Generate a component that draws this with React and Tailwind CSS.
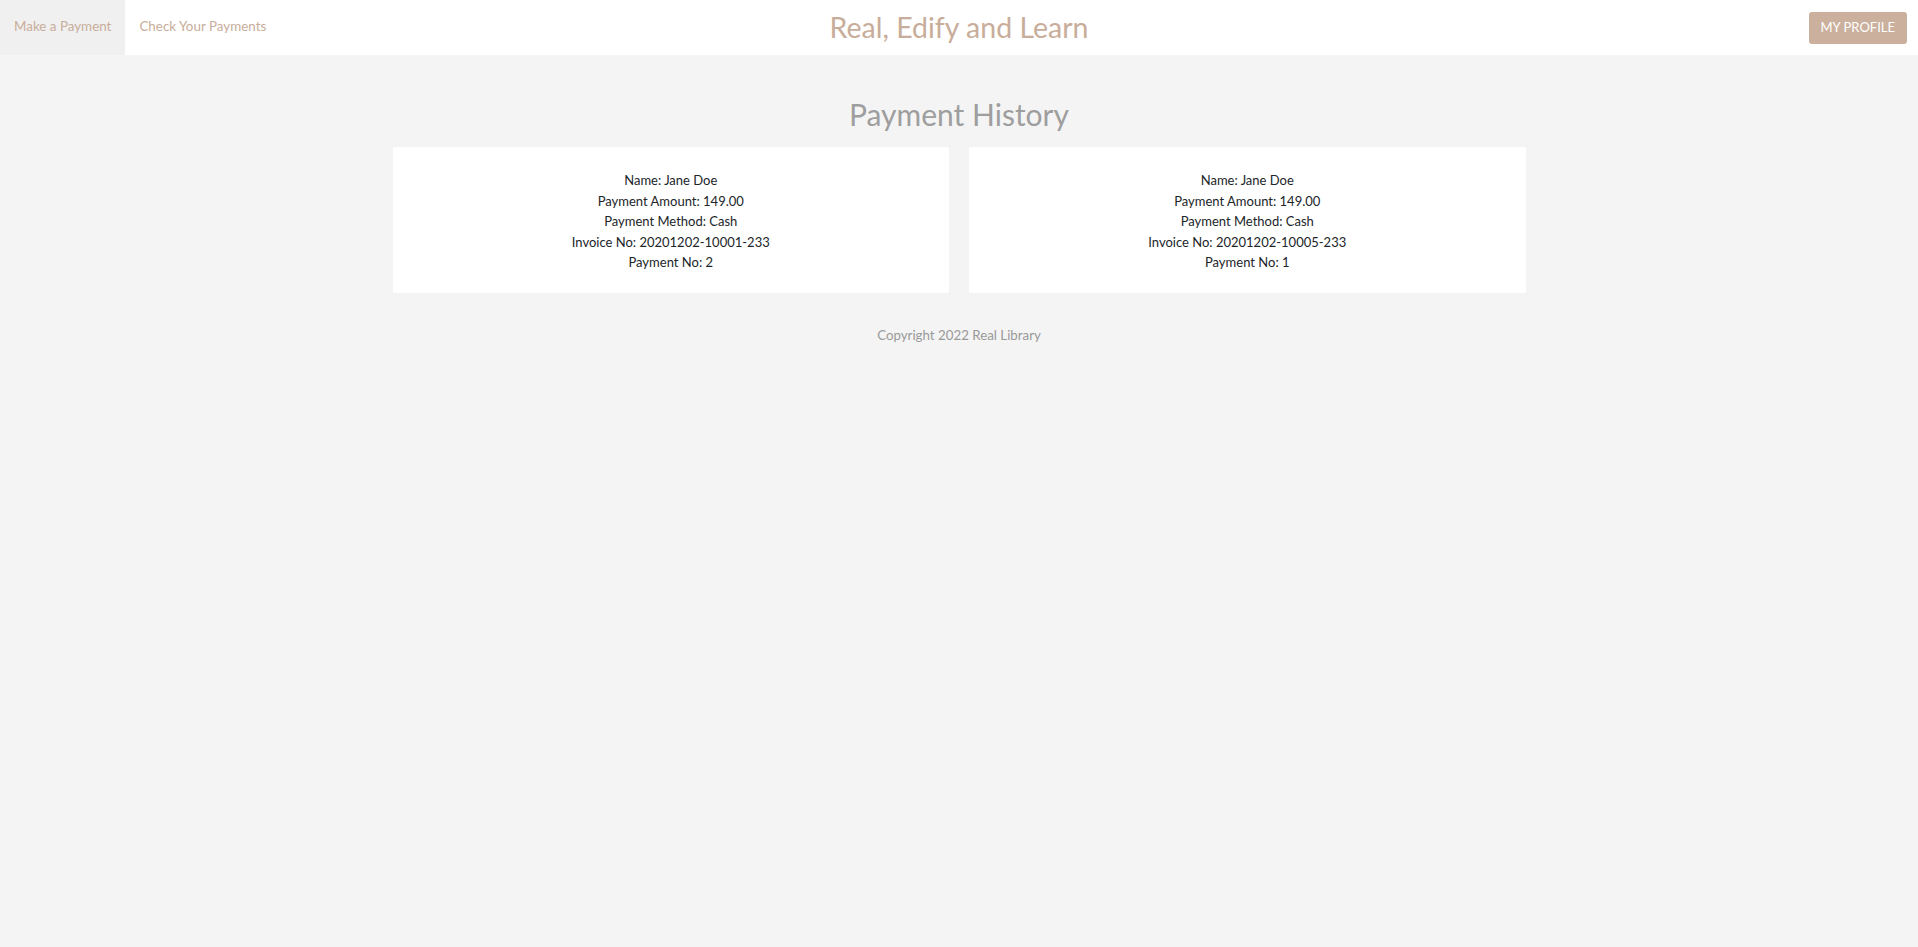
const payments = [
  { name: 'Jane Doe', amount: '149.00', method: 'Cash', invoice: '20201202-10001-233', no: 2 },
  { name: 'Jane Doe', amount: '149.00', method: 'Cash', invoice: '20201202-10005-233', no: 1 },
];

function PaymentCard({ payment }) {
  return (
    <div className="bg-white rounded-[2px] pt-[23px] pb-[20px] text-center text-[13px] leading-[20.5px] text-[#212529]">
      <p>Name: {payment.name}</p>
      <p>Payment Amount: {payment.amount}</p>
      <p>Payment Method: {payment.method}</p>
      <p>Invoice No: {payment.invoice}</p>
      <p>Payment No: {payment.no}</p>
    </div>
  );
}

export default function App() {
  return (
    <div
      className="min-h-screen bg-[#f4f4f4]"
      style={{ fontFamily: '"Segoe UI", Lato, "Noto Sans", sans-serif' }}
    >
      <header className="h-[55px] bg-white flex items-center justify-between relative">
        <nav className="flex h-full text-[13.4px] text-[#c8ad9a]">
          <a href="#" className="flex items-center pb-[2px] px-[14px] bg-[#f0f0f0]">Make a Payment</a>
          <a href="#" className="flex items-center pb-[2px] px-[14px]">Check Your Payments</a>
        </nav>
        <h1 className="absolute left-1/2 -translate-x-1/2 text-[28.5px] text-[#c8ad9a] leading-none pb-[1px]">
          Real, Edify and Learn
        </h1>
        <button className="mr-[11px] h-[32px] px-[12px] rounded-[3px] bg-[#cab09d] text-white text-[13px]">
          MY PROFILE
        </button>
      </header>

      <main className="w-[1133px] mx-auto pt-[40px]">
        <h2 className="text-center text-[30px] leading-[38px] text-[#9e9e9e] mb-[14px]">Payment History</h2>
        <div className="grid grid-cols-2 gap-[20px]">
          {payments.map((p) => (
            <PaymentCard key={p.invoice} payment={p} />
          ))}
        </div>
        <p className="text-center text-[13.3px] text-[#999999] mt-[33px]">Copyright 2022 Real Library</p>
      </main>
    </div>
  );
}
